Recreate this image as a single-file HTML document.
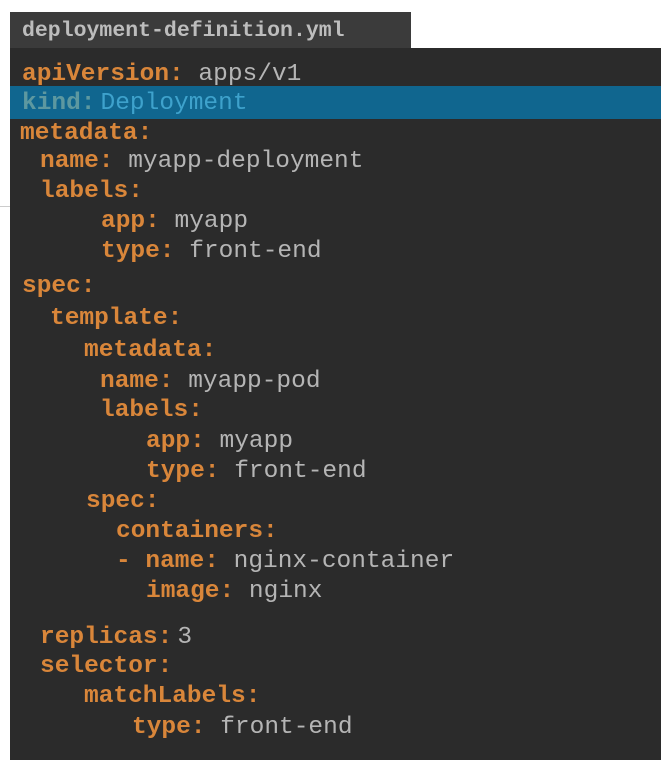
<!DOCTYPE html>
<html><head><meta charset="utf-8"><style>
html,body{margin:0;padding:0;width:661px;height:766px;background:#fff;overflow:hidden;position:relative}
.hd{position:absolute;left:10px;top:12px;width:401px;height:36px;background:#3b3b3b}
.hd span{position:absolute;left:12px;top:7px;font:bold 21.5px "Liberation Mono",monospace;color:#bdbdbd;line-height:24px}
.bd{position:absolute;left:10px;top:48px;width:651px;height:712px;background:#2b2b2b}
.hl{position:absolute;left:10px;top:86px;width:651px;height:33px;background:#10668f}
.l{position:absolute;font-family:"Liberation Mono",monospace;font-size:24.5px;line-height:30px;height:30px;white-space:pre;color:#b5b5b5}
.k{color:#d9863a;font-weight:bold}
.sep{position:absolute;left:0;top:206px;width:10px;height:1px;background:#ccc}
.g{display:inline-block;width:5px}
</style></head><body>
<div class="sep"></div>
<div class="hd"><span>deployment-definition.yml</span></div>
<div class="bd"></div>
<div class="hl"></div>
<div class="l" style="left:22px;top:60px"><span class="k">apiVersion:</span> apps/v1</div>
<div class="l" style="left:22px;top:89px"><span class="k" style="color:#5d98a0">kind:</span><span class="g"></span><span style="color:#3ea2cc">Deployment</span></div>
<div class="l" style="left:20px;top:119px"><span class="k">metadata:</span></div>
<div class="l" style="left:40px;top:147px"><span class="k">name:</span> myapp-deployment</div>
<div class="l" style="left:40px;top:177px"><span class="k">labels:</span></div>
<div class="l" style="left:101px;top:207px"><span class="k">app:</span> myapp</div>
<div class="l" style="left:101px;top:237px"><span class="k">type:</span> front-end</div>
<div class="l" style="left:22px;top:272px"><span class="k">spec:</span></div>
<div class="l" style="left:50px;top:304px"><span class="k">template:</span></div>
<div class="l" style="left:84px;top:336px"><span class="k">metadata:</span></div>
<div class="l" style="left:100px;top:367px"><span class="k">name:</span> myapp-pod</div>
<div class="l" style="left:100px;top:396px"><span class="k">labels:</span></div>
<div class="l" style="left:146px;top:427px"><span class="k">app:</span> myapp</div>
<div class="l" style="left:146px;top:457px"><span class="k">type:</span> front-end</div>
<div class="l" style="left:86px;top:487px"><span class="k">spec:</span></div>
<div class="l" style="left:116px;top:517px"><span class="k">containers:</span></div>
<div class="l" style="left:116px;top:547px"><span class="k">- name:</span> nginx-container</div>
<div class="l" style="left:146px;top:577px"><span class="k">image:</span> nginx</div>
<div class="l" style="left:40px;top:623px"><span class="k">replicas:</span><span class="g"></span>3</div>
<div class="l" style="left:40px;top:652px"><span class="k">selector:</span></div>
<div class="l" style="left:84px;top:682px"><span class="k">matchLabels:</span></div>
<div class="l" style="left:132px;top:713px"><span class="k">type:</span> front-end</div>
</body></html>
